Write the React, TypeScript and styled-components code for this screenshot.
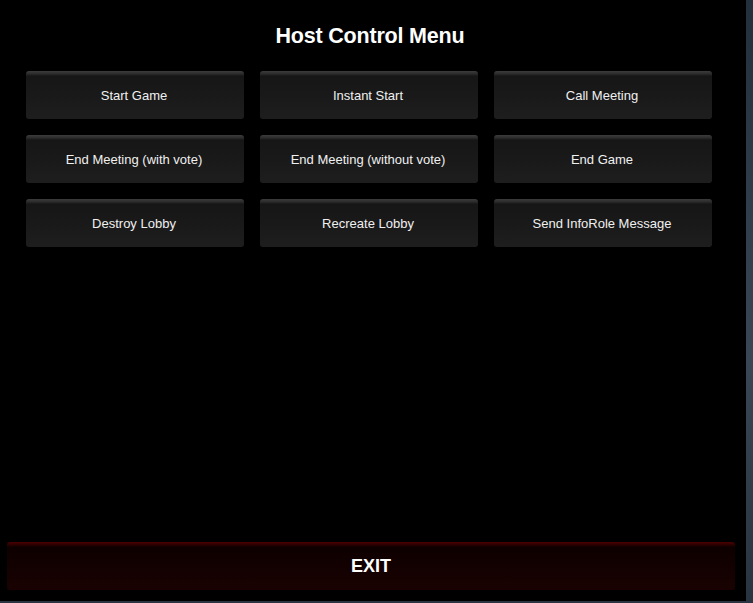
import React, { FC } from 'react';
import styled, { createGlobalStyle } from 'styled-components';

const actions = [
  'Start Game',
  'Instant Start',
  'Call Meeting',
  'End Meeting (with vote)',
  'End Meeting (without vote)',
  'End Game',
  'Destroy Lobby',
  'Recreate Lobby',
  'Send InfoRole Message',
];

const App: FC = () => {
  return (
    <>
      <GlobalStyle />
      <Scene>
        <Panel>
          <Title>Host Control Menu</Title>
          <ActionGrid>
            {actions.map((label) => (
              <ActionButton key={label} type="button">
                {label}
              </ActionButton>
            ))}
          </ActionGrid>
          <ExitButton type="button">EXIT</ExitButton>
        </Panel>
      </Scene>
    </>
  );
};

export default App;

const GlobalStyle = createGlobalStyle`
  html, body {
    margin: 0;
    padding: 0;
    background: #2f3b47;
    font-family: 'Liberation Sans', Arial, sans-serif;
    overflow: hidden;
  }
`;

const Scene = styled.div`
  width: 753px;
  height: 603px;
  background: linear-gradient(180deg, #22303c 0%, #3a4654 60%, #2a3440 100%);
`;

const Panel = styled.div`
  width: 746px;
  height: 601px;
  background: #000;
  display: flex;
  flex-direction: column;
  align-items: flex-start;
`;

const Title = styled.h1`
  align-self: center;
  margin: 24px 0 0;
  padding-right: 6px;
  height: 24px;
  line-height: 24px;
  font-size: 21.5px;
  font-weight: bold;
  letter-spacing: -0.2px;
  color: #fff;
`;

const ActionGrid = styled.div`
  display: grid;
  grid-template-columns: repeat(3, 218px);
  grid-auto-rows: 48px;
  gap: 16px;
  margin: 23px 0 0 26px;
`;

const BaseButton = styled.button`
  border: none;
  border-radius: 3px;
  padding: 0;
  cursor: pointer;
  font-family: 'Liberation Sans', Arial, sans-serif;
  color: #f0f0f0;
`;

const ActionButton = styled(BaseButton)`
  font-size: 13px;
  padding-right: 2px;
  background: linear-gradient(
    180deg,
    #3c3c3c 0px,
    #2a2a2a 3px,
    #161616 5px,
    #1a1a1a 60%,
    #1e1e1e 100%
  );
`;

const ExitButton = styled(BaseButton)`
  margin: auto 0 11px 7px;
  width: 728px;
  height: 48px;
  font-size: 18px;
  font-weight: bold;
  color: #fff;
  background: linear-gradient(
    180deg,
    #4c0000 0px,
    #2a0000 3px,
    #0e0000 5px,
    #140101 60%,
    #1a0202 100%
  );
`;
